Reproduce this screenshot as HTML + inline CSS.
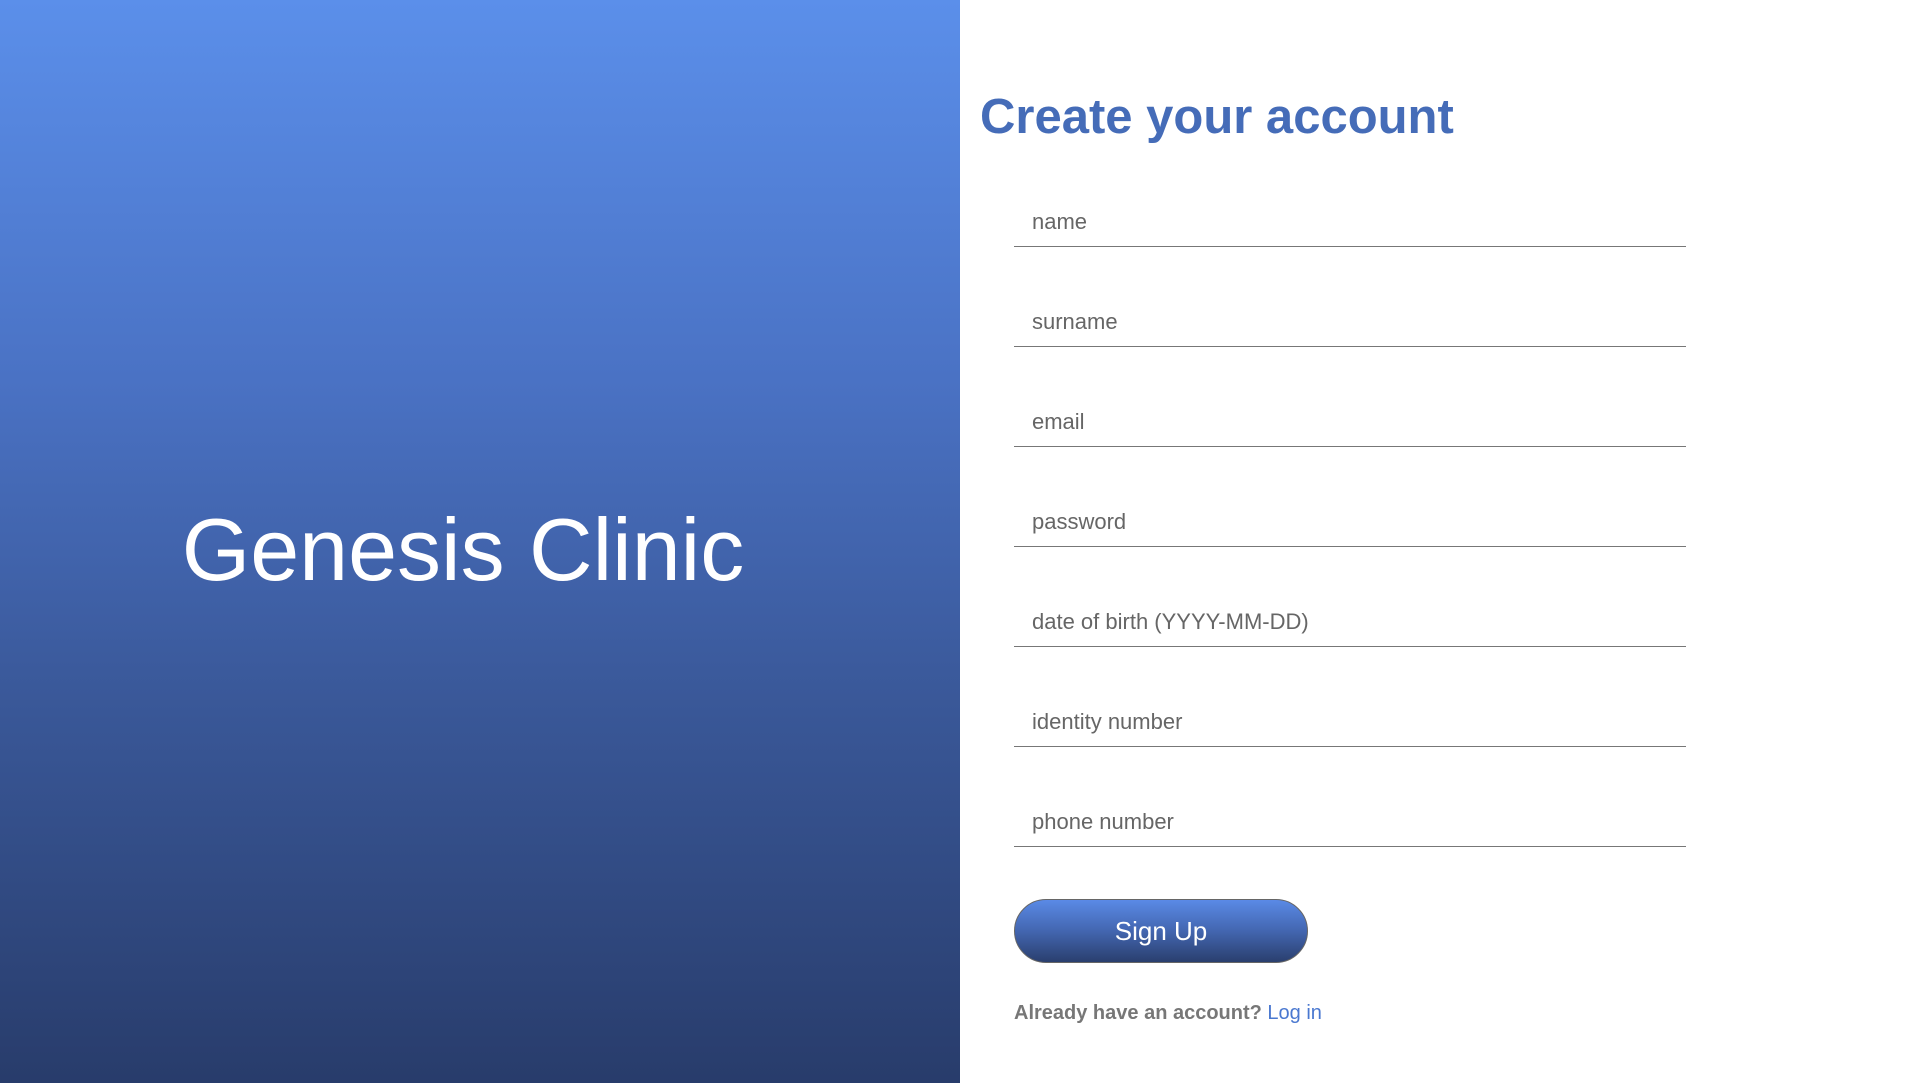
<!DOCTYPE html>
<html><head><meta charset="utf-8"><style>
html,body{margin:0;padding:0;width:1920px;height:1083px;overflow:hidden;background:#fff;font-family:"Liberation Sans",sans-serif}
.left{position:absolute;left:0;top:0;width:960px;height:1083px;background:linear-gradient(#5b8fea,#4a72c4 35%,#3b5a9c 62%,#283c6b)}
.brand{position:absolute;left:0;width:926px;top:500px;text-align:center;color:#fff;font-size:88px;line-height:100px}
h1{position:absolute;left:980px;top:87px;margin:0;font-size:49px;line-height:60px;color:#456cb8;font-weight:bold}
.f{position:absolute;left:1014px;width:672px;height:40px;border-bottom:1.5px solid #777}
.f span{position:absolute;left:18px;top:3px;font-size:22px;color:#666}
.btn{position:absolute;left:1014px;top:899px;width:292px;height:62px;border:1px solid #666;border-radius:32px;background:linear-gradient(#5a8ae6,#4366b0 50%,#2a3f6e);color:#fff;font-size:26px;text-align:center;line-height:62px}
.al{position:absolute;left:1014px;top:1002px;font-size:20px;color:#777;font-weight:bold}
.al a{color:#4a78d0;font-weight:normal;text-decoration:none}
</style></head><body>
<div class="left"><div class="brand">Genesis Clinic</div></div>
<h1>Create your account</h1>
<div class="f" style="top:206px"><span>name</span></div>
<div class="f" style="top:306px"><span>surname</span></div>
<div class="f" style="top:406px"><span>email</span></div>
<div class="f" style="top:506px"><span>password</span></div>
<div class="f" style="top:606px"><span>date of birth (YYYY-MM-DD)</span></div>
<div class="f" style="top:706px"><span>identity number</span></div>
<div class="f" style="top:806px"><span>phone number</span></div>
<div class="btn">Sign Up</div>
<div class="al">Already have an account? <a>Log in</a></div>
</body></html>
